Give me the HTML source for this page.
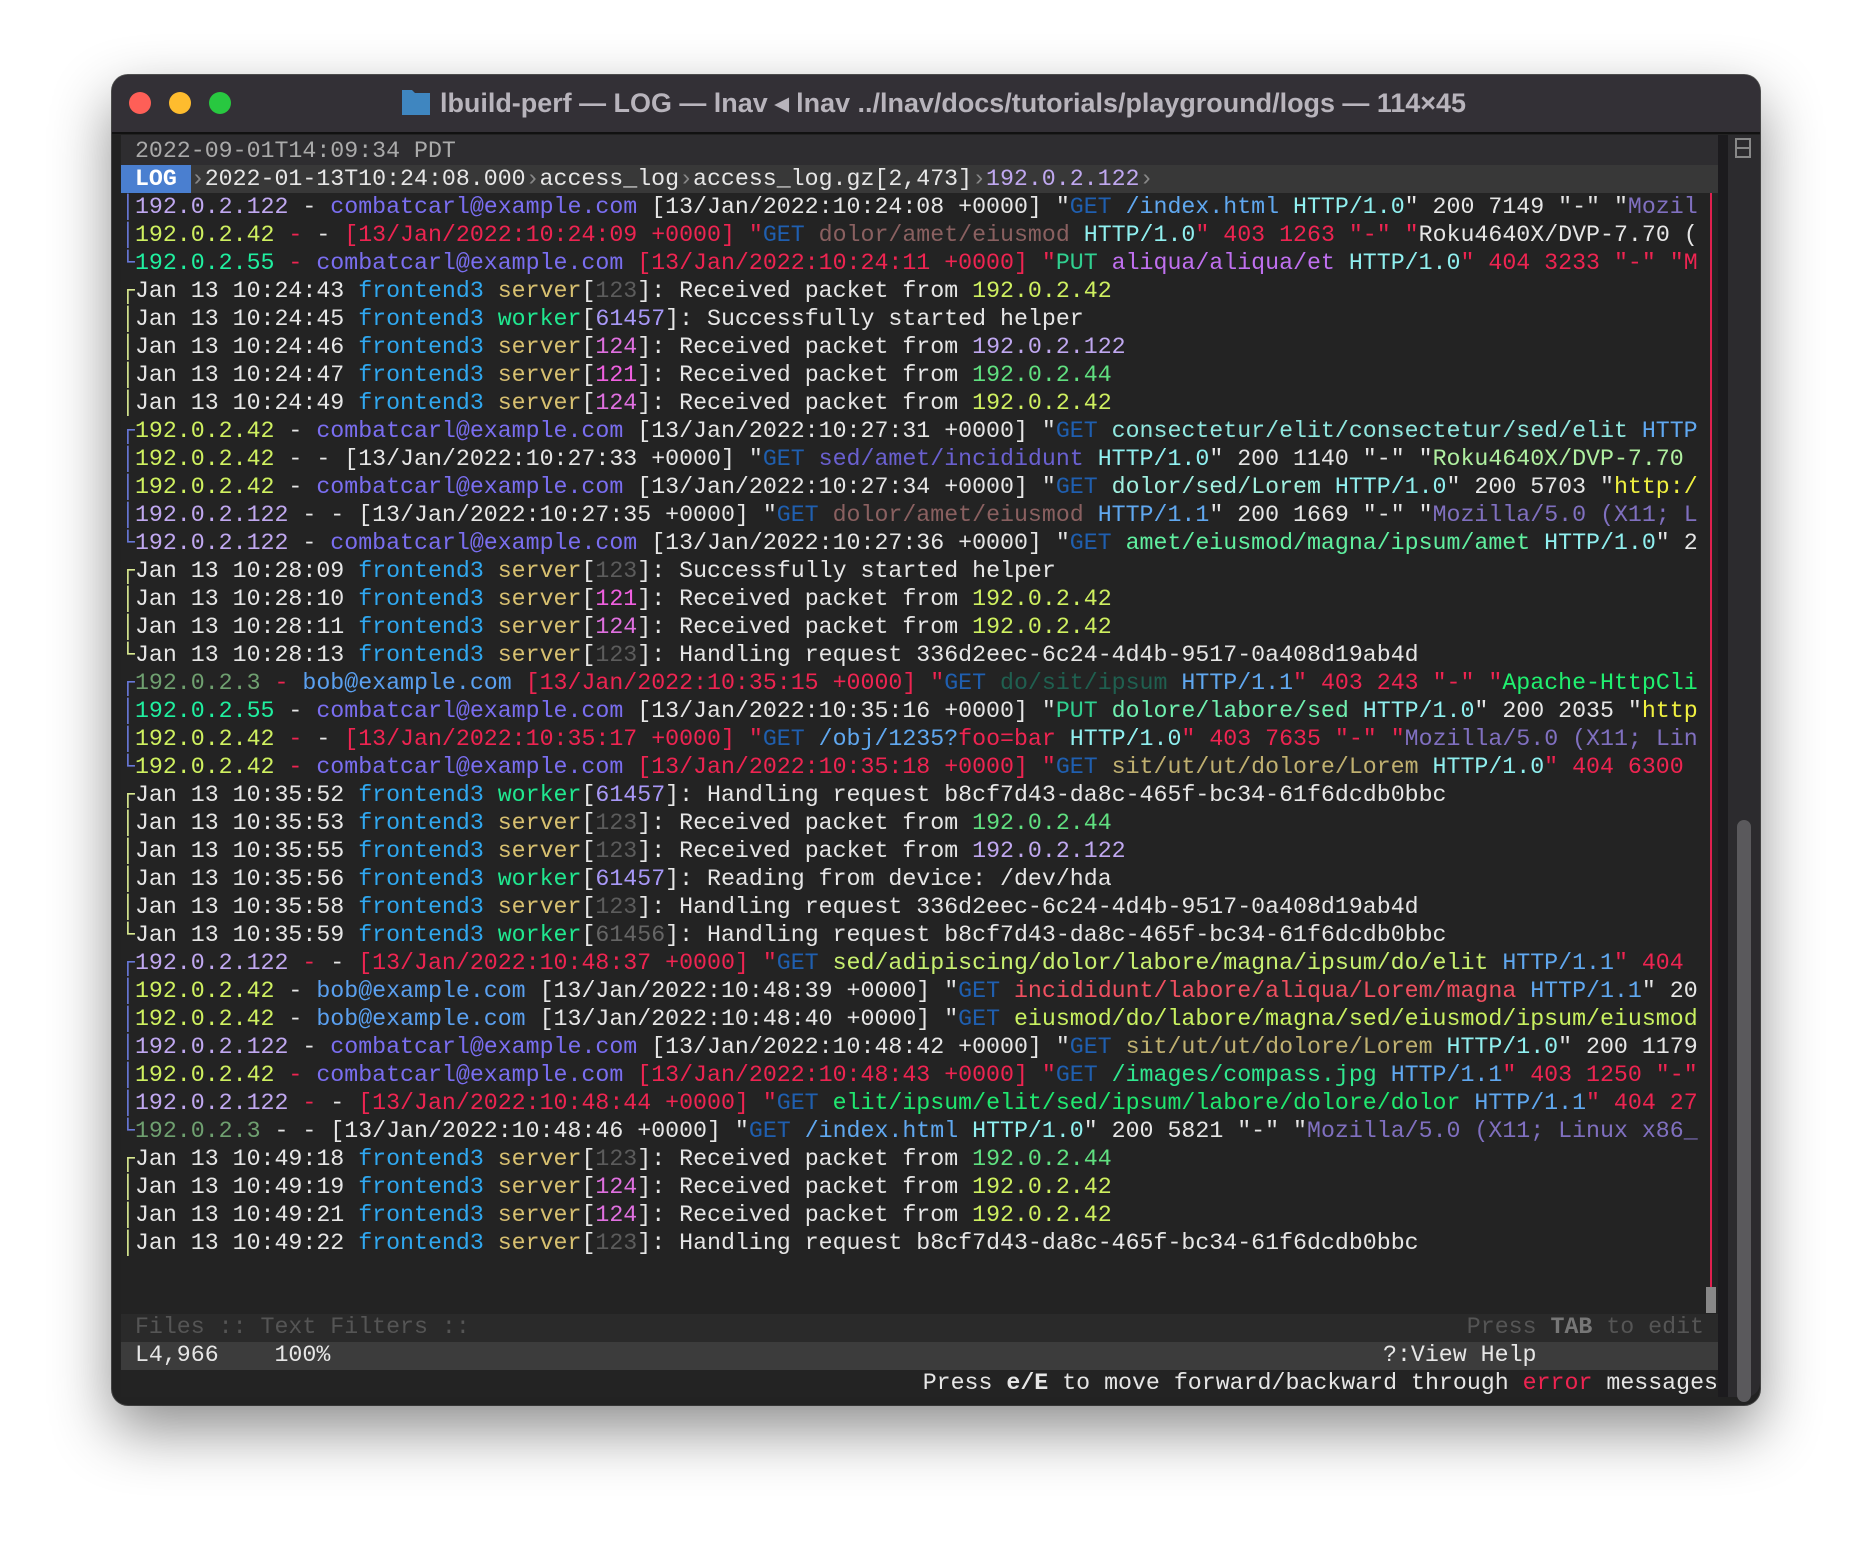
<!DOCTYPE html>
<html><head><meta charset="utf-8">
<style>
body{margin:0;width:1870px;height:1554px;background:#fff;position:relative;overflow:hidden;font-family:"Liberation Mono",monospace;}
.win{position:absolute;left:112px;top:75px;width:1648px;height:1330px;border-radius:16px;background:#222;box-shadow:0 25px 60px rgba(0,0,0,.45),0 0 0 1px #555;overflow:hidden}
.tb{position:absolute;left:0;top:0;width:100%;height:57px;background:#333036;border-bottom:2px solid #111}
.r{position:absolute;left:0;height:28px;line-height:28px;width:1597px;white-space:pre;overflow:hidden;font-size:23.25px;color:#e6e6e6}
.sep{display:inline-block;width:13.95px;color:#888;text-align:center}
.a{color:#6878d8}.y{color:#d8e890}
.i1{color:#c0a8f0}.i2{color:#cff060}.i5{color:#20f0a0}.i3{color:#6fa070}.i4{color:#60e080}
.cc{color:#7a6ef0}.bob{color:#5aa0f0}.R{color:#ee2451}.G{color:#1f5fb0}.P{color:#30d090}
.h0{color:#90f0f0}.h1{color:#60a8f0}.fe{color:#30a8f0}.sv{color:#d8c070}.wk{color:#20e890}
.p3{color:#5c5c5c}.p4{color:#e070e0}.p1{color:#f060e0}.p7{color:#a898f8}.p6{color:#666}
.moz{color:#8070c0}.yl{color:#f0f040}.gr{color:#20f070}.lg{color:#b0f0a0}
</style></head><body>
<div class="win"><div class="tb"></div></div>
<div style="position:absolute;left:129px;top:92px;width:22px;height:22px;border-radius:50%;background:#fe5f57"></div>
<div style="position:absolute;left:169px;top:92px;width:22px;height:22px;border-radius:50%;background:#febc2e"></div>
<div style="position:absolute;left:209px;top:92px;width:22px;height:22px;border-radius:50%;background:#28c840"></div>
<svg style="position:absolute;left:0;top:0" width="1870" height="140">
 <path d="M402 90 h10 l3 3 h15 v22 h-28z" fill="#3f86c0"/>
 <text x="440" y="112" font-family="Liberation Sans, sans-serif" font-weight="bold" font-size="27" fill="#b8b4bc" textLength="1026" lengthAdjust="spacingAndGlyphs">lbuild-perf — LOG — lnav ◂ lnav ../lnav/docs/tutorials/playground/logs — 114×45</text>
</svg>
<div style="position:absolute;left:121px;top:135px;width:1597px;height:1262px;background:#232323"></div>
<div style="position:absolute;left:1718px;top:135px;width:42px;height:1262px;background:#2c2b2e;border-left:10px solid #1c1b1e;box-sizing:border-box;border-bottom-right-radius:14px"></div>
<div style="position:absolute;left:1735px;top:138px;width:16px;height:20px;border:2px solid #888;box-sizing:border-box"></div>
<div style="position:absolute;left:1735px;top:147px;width:16px;height:2px;background:#888"></div>
<div style="position:absolute;left:1737px;top:820px;width:14px;height:582px;background:#5a595c;border-radius:7px"></div>
<div style="position:absolute;left:121px;top:135px;width:1597px;height:30px;background:#2e2d30"></div>
<div style="position:absolute;left:121px;top:165px;width:1597px;height:28px;background:#383838"></div>
<div style="position:absolute;left:121px;top:165px;width:70px;height:28px;background:#4a7fd0"></div>
<div style="position:absolute;left:1710px;top:193px;width:2px;height:1120px;background:#e0204f"></div>
<div style="position:absolute;left:1706px;top:1287px;width:10px;height:26px;background:#888"></div>
<div style="position:absolute;left:121px;top:1314px;width:1597px;height:28px;background:#2a2a2a"></div>
<div style="position:absolute;left:121px;top:1342px;width:1597px;height:28px;background:#3c3c3c"></div>
<div style="position:absolute;left:121px;top:137px">
<div class="r" style="top:0;color:#aaa"> 2022-09-01T14:09:34 PDT</div>
<div class="r" style="top:28px"><b style="color:#fff"> LOG </b><span class="sep">›</span>2022-01-13T10:24:08.000<span class="sep">›</span>access_log<span class="sep">›</span>access_log.gz[2,473]<span class="sep">›</span><span class="i1">192.0.2.122</span><span class="sep">›</span></div>
<div class="r" style="top:56px"><span class="a">│</span><span class="i1">192.0.2.122</span> - <span class="cc">combatcarl@example.com</span> [13/Jan/2022:10:24:08 +0000] "<span class="G">GET</span> <span class="h1">/index.html</span> <span class="h0">HTTP/1.0</span>" 200 7149 "-" "<span class="moz">Mozil</span></div>
<div class="r" style="top:84px"><span class="a">│</span><span class="i2">192.0.2.42</span><span class="R"> - </span>- <span class="R">[13/Jan/2022:10:24:09 +0000] "</span><span class="G">GET</span> <span style="color:#8a6060">dolor/amet/eiusmod</span> <span class="h0">HTTP/1.0</span><span class="R">" 403 1263 "-" "</span>Roku4640X/DVP-7.70 (</div>
<div class="r" style="top:112px"><span class="a">└</span><span class="i5">192.0.2.55</span><span class="R"> - </span><span class="cc">combatcarl@example.com</span> <span class="R">[13/Jan/2022:10:24:11 +0000] "</span><span class="P">PUT</span> <span style="color:#c070f0">aliqua/aliqua/et</span> <span class="h0">HTTP/1.0</span><span class="R">" 404 3233 "-" "M</span></div>
<div class="r" style="top:140px"><span class="y">┌</span>Jan 13 10:24:43 <span class="fe">frontend3</span> <span class="sv">server</span>[<span class="p3">123</span>]: Received packet from <span class="i2">192.0.2.42</span></div>
<div class="r" style="top:168px"><span class="y">│</span>Jan 13 10:24:45 <span class="fe">frontend3</span> <span class="wk">worker</span>[<span class="p7">61457</span>]: Successfully started helper</div>
<div class="r" style="top:196px"><span class="y">│</span>Jan 13 10:24:46 <span class="fe">frontend3</span> <span class="sv">server</span>[<span class="p4">124</span>]: Received packet from <span class="i1">192.0.2.122</span></div>
<div class="r" style="top:224px"><span class="y">│</span>Jan 13 10:24:47 <span class="fe">frontend3</span> <span class="sv">server</span>[<span class="p1">121</span>]: Received packet from <span class="i4">192.0.2.44</span></div>
<div class="r" style="top:252px"><span class="y">│</span>Jan 13 10:24:49 <span class="fe">frontend3</span> <span class="sv">server</span>[<span class="p4">124</span>]: Received packet from <span class="i2">192.0.2.42</span></div>
<div class="r" style="top:280px"><span class="a">┌</span><span class="i2">192.0.2.42</span> - <span class="cc">combatcarl@example.com</span> [13/Jan/2022:10:27:31 +0000] "<span class="G">GET</span> <span style="color:#90e8e0">consectetur/elit/consectetur/sed/elit</span> <span class="h1">HTTP</span></div>
<div class="r" style="top:308px"><span class="a">│</span><span class="i2">192.0.2.42</span> - - [13/Jan/2022:10:27:33 +0000] "<span class="G">GET</span> <span style="color:#6a60d0">sed/amet/incididunt</span> <span class="h0">HTTP/1.0</span>" 200 1140 "-" "<span class="lg">Roku4640X/DVP-7.70</span></div>
<div class="r" style="top:336px"><span class="a">│</span><span class="i2">192.0.2.42</span> - <span class="cc">combatcarl@example.com</span> [13/Jan/2022:10:27:34 +0000] "<span class="G">GET</span> <span style="color:#a0f0e0">dolor/sed/Lorem</span> <span class="h0">HTTP/1.0</span>" 200 5703 "<span class="yl">http:/</span></div>
<div class="r" style="top:364px"><span class="a">│</span><span class="i1">192.0.2.122</span> - - [13/Jan/2022:10:27:35 +0000] "<span class="G">GET</span> <span style="color:#8a6060">dolor/amet/eiusmod</span> <span class="h1">HTTP/1.1</span>" 200 1669 "-" "<span class="moz">Mozilla/5.0 (X11; L</span></div>
<div class="r" style="top:392px"><span class="a">└</span><span class="i1">192.0.2.122</span> - <span class="cc">combatcarl@example.com</span> [13/Jan/2022:10:27:36 +0000] "<span class="G">GET</span> <span style="color:#60f0a0">amet/eiusmod/magna/ipsum/amet</span> <span class="h0">HTTP/1.0</span>" 2</div>
<div class="r" style="top:420px"><span class="y">┌</span>Jan 13 10:28:09 <span class="fe">frontend3</span> <span class="sv">server</span>[<span class="p3">123</span>]: Successfully started helper</div>
<div class="r" style="top:448px"><span class="y">│</span>Jan 13 10:28:10 <span class="fe">frontend3</span> <span class="sv">server</span>[<span class="p1">121</span>]: Received packet from <span class="i2">192.0.2.42</span></div>
<div class="r" style="top:476px"><span class="y">│</span>Jan 13 10:28:11 <span class="fe">frontend3</span> <span class="sv">server</span>[<span class="p4">124</span>]: Received packet from <span class="i2">192.0.2.42</span></div>
<div class="r" style="top:504px"><span class="y">└</span>Jan 13 10:28:13 <span class="fe">frontend3</span> <span class="sv">server</span>[<span class="p3">123</span>]: Handling request 336d2eec-6c24-4d4b-9517-0a408d19ab4d</div>
<div class="r" style="top:532px"><span class="a">┌</span><span class="i3">192.0.2.3</span><span class="R"> - </span><span class="bob">bob@example.com</span> <span class="R">[13/Jan/2022:10:35:15 +0000] "</span><span class="G">GET</span> <span style="color:#1f6050">do/sit/ipsum</span> <span class="h1">HTTP/1.1</span><span class="R">" 403 243 "-" "</span><span class="gr">Apache-HttpCli</span></div>
<div class="r" style="top:560px"><span class="a">│</span><span class="i5">192.0.2.55</span> - <span class="cc">combatcarl@example.com</span> [13/Jan/2022:10:35:16 +0000] "<span class="P">PUT</span> <span style="color:#70f0b0">dolore/labore/sed</span> <span class="h0">HTTP/1.0</span>" 200 2035 "<span class="yl">http</span></div>
<div class="r" style="top:588px"><span class="a">│</span><span class="i2">192.0.2.42</span><span class="R"> - </span>- <span class="R">[13/Jan/2022:10:35:17 +0000] "</span><span class="G">GET</span> <span class="h1">/obj/1235?</span><span class="R">foo=bar</span> <span class="h0">HTTP/1.0</span><span class="R">" 403 7635 "-" "</span><span class="moz">Mozilla/5.0 (X11; Lin</span></div>
<div class="r" style="top:616px"><span class="a">└</span><span class="i2">192.0.2.42</span><span class="R"> - </span><span class="cc">combatcarl@example.com</span> <span class="R">[13/Jan/2022:10:35:18 +0000] "</span><span class="G">GET</span> <span style="color:#c0b070">sit/ut/ut/dolore/Lorem</span> <span class="h0">HTTP/1.0</span><span class="R">" 404 6300</span></div>
<div class="r" style="top:644px"><span class="y">┌</span>Jan 13 10:35:52 <span class="fe">frontend3</span> <span class="wk">worker</span>[<span class="p7">61457</span>]: Handling request b8cf7d43-da8c-465f-bc34-61f6dcdb0bbc</div>
<div class="r" style="top:672px"><span class="y">│</span>Jan 13 10:35:53 <span class="fe">frontend3</span> <span class="sv">server</span>[<span class="p3">123</span>]: Received packet from <span class="i4">192.0.2.44</span></div>
<div class="r" style="top:700px"><span class="y">│</span>Jan 13 10:35:55 <span class="fe">frontend3</span> <span class="sv">server</span>[<span class="p3">123</span>]: Received packet from <span class="i1">192.0.2.122</span></div>
<div class="r" style="top:728px"><span class="y">│</span>Jan 13 10:35:56 <span class="fe">frontend3</span> <span class="wk">worker</span>[<span class="p7">61457</span>]: Reading from device: /dev/hda</div>
<div class="r" style="top:756px"><span class="y">│</span>Jan 13 10:35:58 <span class="fe">frontend3</span> <span class="sv">server</span>[<span class="p3">123</span>]: Handling request 336d2eec-6c24-4d4b-9517-0a408d19ab4d</div>
<div class="r" style="top:784px"><span class="y">└</span>Jan 13 10:35:59 <span class="fe">frontend3</span> <span class="wk">worker</span>[<span class="p6">61456</span>]: Handling request b8cf7d43-da8c-465f-bc34-61f6dcdb0bbc</div>
<div class="r" style="top:812px"><span class="a">┌</span><span class="i1">192.0.2.122</span><span class="R"> - </span>- <span class="R">[13/Jan/2022:10:48:37 +0000] "</span><span class="G">GET</span> <span style="color:#c8f070">sed/adipiscing/dolor/labore/magna/ipsum/do/elit</span> <span class="h1">HTTP/1.1</span><span class="R">" 404</span></div>
<div class="r" style="top:840px"><span class="a">│</span><span class="i2">192.0.2.42</span> - <span class="bob">bob@example.com</span> [13/Jan/2022:10:48:39 +0000] "<span class="G">GET</span> <span style="color:#f05060">incididunt/labore/aliqua/Lorem/magna</span> <span class="h1">HTTP/1.1</span>" 20</div>
<div class="r" style="top:868px"><span class="a">│</span><span class="i2">192.0.2.42</span> - <span class="bob">bob@example.com</span> [13/Jan/2022:10:48:40 +0000] "<span class="G">GET</span> <span style="color:#c8f060">eiusmod/do/labore/magna/sed/eiusmod/ipsum/eiusmod</span></div>
<div class="r" style="top:896px"><span class="a">│</span><span class="i1">192.0.2.122</span> - <span class="cc">combatcarl@example.com</span> [13/Jan/2022:10:48:42 +0000] "<span class="G">GET</span> <span style="color:#c0b070">sit/ut/ut/dolore/Lorem</span> <span class="h0">HTTP/1.0</span>" 200 1179</div>
<div class="r" style="top:924px"><span class="a">│</span><span class="i2">192.0.2.42</span><span class="R"> - </span><span class="cc">combatcarl@example.com</span> <span class="R">[13/Jan/2022:10:48:43 +0000] "</span><span class="G">GET</span> <span style="color:#30e890">/images/compass.jpg</span> <span class="h1">HTTP/1.1</span><span class="R">" 403 1250 "-"</span></div>
<div class="r" style="top:952px"><span class="a">│</span><span class="i1">192.0.2.122</span><span class="R"> - </span>- <span class="R">[13/Jan/2022:10:48:44 +0000] "</span><span class="G">GET</span> <span style="color:#20e870">elit/ipsum/elit/sed/ipsum/labore/dolore/dolor</span> <span class="h1">HTTP/1.1</span><span class="R">" 404 27</span></div>
<div class="r" style="top:980px"><span class="a">└</span><span class="i3">192.0.2.3</span> - - [13/Jan/2022:10:48:46 +0000] "<span class="G">GET</span> <span class="h1">/index.html</span> <span class="h0">HTTP/1.0</span>" 200 5821 "-" "<span class="moz">Mozilla/5.0 (X11; Linux x86_</span></div>
<div class="r" style="top:1008px"><span class="y">┌</span>Jan 13 10:49:18 <span class="fe">frontend3</span> <span class="sv">server</span>[<span class="p3">123</span>]: Received packet from <span class="i4">192.0.2.44</span></div>
<div class="r" style="top:1036px"><span class="y">│</span>Jan 13 10:49:19 <span class="fe">frontend3</span> <span class="sv">server</span>[<span class="p4">124</span>]: Received packet from <span class="i2">192.0.2.42</span></div>
<div class="r" style="top:1064px"><span class="y">│</span>Jan 13 10:49:21 <span class="fe">frontend3</span> <span class="sv">server</span>[<span class="p4">124</span>]: Received packet from <span class="i2">192.0.2.42</span></div>
<div class="r" style="top:1092px"><span class="y">│</span>Jan 13 10:49:22 <span class="fe">frontend3</span> <span class="sv">server</span>[<span class="p3">123</span>]: Handling request b8cf7d43-da8c-465f-bc34-61f6dcdb0bbc</div>
<div class="r" style="top:1176px;color:#555"> Files :: Text Filters ::</div>
<div class="r" style="top:1176px;color:#555;text-align:right;padding-right:14px;box-sizing:border-box">Press <b style="color:#777">TAB</b> to edit</div>
<div class="r" style="top:1204px"> L4,966    100%</div>
<div class="r" style="top:1204px;left:1262px;width:300px">?:View Help</div>
<div class="r" style="top:1232px;text-align:right">Press <b>e/E</b> to move forward/backward through <span class="R">error</span> messages</div>
</div>
</body></html>
